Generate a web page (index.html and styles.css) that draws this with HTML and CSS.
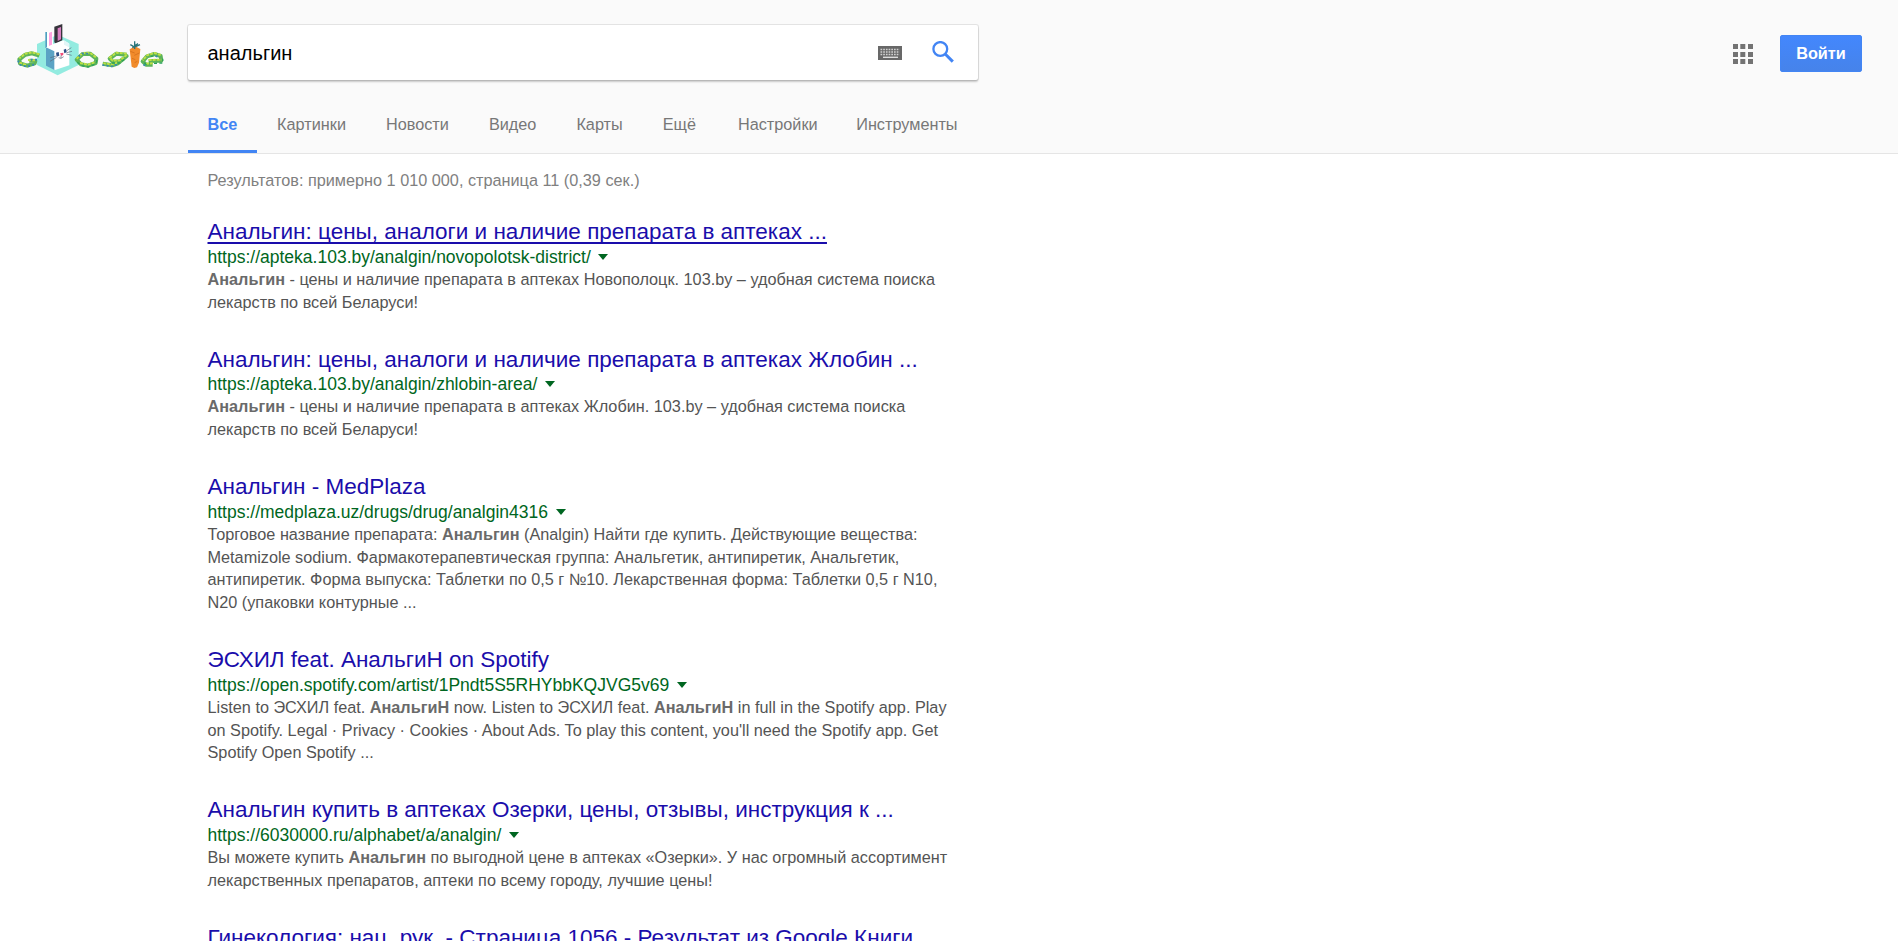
FILE: index.html
```html
<!DOCTYPE html>
<html lang="ru">
<head>
<meta charset="utf-8">
<title>анальгин - Поиск</title>
<link rel="stylesheet" href="styles.css">
</head>
<body>
<header class="header">
  <div class="topbar">
    <svg class="logo" viewBox="0 0 540 240" aria-label="Логотип">
      <path d="M173 74 236 102V165L173 196 111 165V102Z" fill="#93ebe0"/>
      <path d="M137 66 157 64 160 112 137 115Z" fill="#fff"/>
      <path d="M136 66h5v48h-5z" fill="#4d9fc0"/>
      <path d="M147 68 156 65V106L147 109Z" fill="#ffa3e0"/>
      <path d="M163 50 187 42V91L168 101 163 97Z" fill="#37343c"/>
      <path d="M173 55 183 51V88L173 93Z" fill="#d87fc1"/>
      <path d="M138 112 166 100 190 91 208 101V166L165 180 138 166Z" fill="#fff"/>
      <path d="M138 112 163 124V180L138 167Z" fill="#5ba3c4"/>
      <path d="M192 91 207 100V112L192 104Z" fill="#e2f6f7"/>
      <path d="M168 128 176 126 178 137 170 140ZM191 119 198 116 200 127 193 130Z" fill="#2e5187"/>
      <path d="M180 130 190 128 190 134 184 138Z" fill="#f24e79"/>
      <path d="M183 136v9M176 143l7 2 8-5M199 123l15-10M200 128l16-4M199 132l16 4M169 138l-18 5M170 142l-20 12" fill="none" stroke="#59667a" stroke-width="2"/>
      <g fill="none" stroke-linejoin="round">
        <g stroke="#5cb45a" stroke-width="12">
          <path d="M118 137 96 130 76 134 58 148 60 160 82 167 104 160 106 153 88 152"/>
          <path d="M230 149 248 132 270 131 289 146 287 159 264 167 243 163Z"/>
          <path d="M380 134 349 131 329 146 338 155 360 154 380 138 354 160 337 166 308 161"/>
          <path d="M446 153 484 152 482 138 463 132 441 139 428 154 438 164 458 164"/>
        </g>
        <g stroke="#bfe043" stroke-width="6" stroke-dasharray="9 3">
          <path d="M118 133 96 127 76 131 58 145M84 150l22 1M58 158l22 7"/>
          <path d="M230 146 248 129 270 128 289 143M240 159 264 164 287 156"/>
          <path d="M380 131 349 128 329 143 338 152 360 151 380 135M352 158l-16 6-26-4"/>
          <path d="M446 150 484 149M482 135 463 129 441 136 428 151M438 161l20-1"/>
        </g>
        <g stroke="#3587b6" stroke-width="5" stroke-dasharray="6 7">
          <path d="M54 152l5 12 22 6 25-7M92 149h19M236 139l10-9 22 1M307 165l28 4 17-6M430 164l12 5M472 140l-10-4"/>
        </g>
        <g stroke="#2ba15a" stroke-width="4" stroke-dasharray="9 7">
          <path d="M232 157l12 10 21 4 23-10 3-14M336 159l24 0 17-14M433 158l10 9M462 160l26-1v-13M452 140l12-3"/>
        </g>
      </g>
      <path d="M389 118 405 109 421 117 417 158 411 172 403 174 395 170Z" fill="#f18b2b"/>
      <path d="M391 124l13 5M403 136l15-7M396 145l10 4M404 158l8-4" stroke="#d9741f" stroke-width="3"/>
      <path d="M404 94v23M391 104l13 7 16-7M397 113l17-12" stroke="#2a767b" stroke-width="4" fill="none"/>
    </svg>
    <form class="search">
      <span class="query">анальгин</span>
      <svg class="keyboard" viewBox="0 0 24 14">
        <path d="M0 0h24v14H0z" fill="#686868"/>
        <path d="M2.5 3.5h19M2.5 6h19M2.5 8.500h19" stroke="#d0d0d0" stroke-width="1.4" stroke-dasharray="1.7 1"/>
        <path d="M5 11.3h15" stroke="#ddd" stroke-width="1.4"/>
      </svg>
      <svg class="lens" viewBox="0 0 22 22">
        <circle cx="8.3" cy="8" r="6.9" fill="none" stroke="#4285f4" stroke-width="2.3"/>
        <path d="M13.2 13 20.8 20.6" stroke="#4285f4" stroke-width="3"/>
      </svg>
    </form>
    <div class="account">
      <svg class="apps" viewBox="0 0 20 20" fill="#737373">
        <path d="M0 0h5v5H0zM7.300 0h5v5h-5zM15 0h5v5h-5zM0 8h5v5H0zM7.300 8h5v5h-5zM15 8h5v5h-5zM0 15h5v5H0zM7.300 15h5v5h-5zM15 15h5v5h-5z"/>
      </svg>
      <a class="signin">Войти</a>
    </div>
  </div>
  <nav class="tabs">
    <a class="tab active">Все</a>
    <a class="tab">Картинки</a>
    <a class="tab">Новости</a>
    <a class="tab">Видео</a>
    <a class="tab">Карты</a>
    <a class="tab">Ещё</a>
    <a class="tab settings">Настройки</a>
    <a class="tab tools">Инструменты</a>
  </nav>
</header>
<main class="main">
  <div class="stats">Результатов: примерно 1 010 000, страница 11 (0,39 сек.)</div>
  <article class="result">
    <h3 class="title focused"><a>Анальгин: цены, аналоги и наличие препарата в аптеках ...</a></h3>
    <div class="url">https://apteka.103.by/analgin/novopolotsk-district/<i class="caret"></i></div>
    <p class="snippet"><b>Анальгин</b> - цены и наличие препарата в аптеках Новополоцк. 103.by – удобная система поиска<br>лекарств по всей Беларуси!</p>
  </article>
  <article class="result">
    <h3 class="title"><a>Анальгин: цены, аналоги и наличие препарата в аптеках Жлобин ...</a></h3>
    <div class="url">https://apteka.103.by/analgin/zhlobin-area/<i class="caret"></i></div>
    <p class="snippet"><b>Анальгин</b> - цены и наличие препарата в аптеках Жлобин. 103.by – удобная система поиска<br>лекарств по всей Беларуси!</p>
  </article>
  <article class="result">
    <h3 class="title"><a>Анальгин - MedPlaza</a></h3>
    <div class="url">https://medplaza.uz/drugs/drug/analgin4316<i class="caret"></i></div>
    <p class="snippet">Торговое название препарата: <b>Анальгин</b> (Analgin) Найти где купить. Действующие вещества:<br>Metamizole sodium. Фармакотерапевтическая группа: Анальгетик, антипиретик, Анальгетик,<br>антипиретик. Форма выпуска: Таблетки по 0,5 г №10. Лекарственная форма: Таблетки 0,5 г N10,<br>N20 (упаковки контурные ...</p>
  </article>
  <article class="result">
    <h3 class="title"><a>ЭСХИЛ feat. АнальгиН on Spotify</a></h3>
    <div class="url">https://open.spotify.com/artist/1Pndt5S5RHYbbKQJVG5v69<i class="caret"></i></div>
    <p class="snippet">Listen to ЭСХИЛ feat. <b>АнальгиН</b> now. Listen to ЭСХИЛ feat. <b>АнальгиН</b> in full in the Spotify app. Play<br>on Spotify. Legal · Privacy · Cookies · About Ads. To play this content, you'll need the Spotify app. Get<br>Spotify Open Spotify ...</p>
  </article>
  <article class="result">
    <h3 class="title"><a>Анальгин купить в аптеках Озерки, цены, отзывы, инструкция к ...</a></h3>
    <div class="url">https://6030000.ru/alphabet/a/analgin/<i class="caret"></i></div>
    <p class="snippet">Вы можете купить <b>Анальгин</b> по выгодной цене в аптеках «Озерки». У нас огромный ассортимент<br>лекарственных препаратов, аптеки по всему городу, лучшие цены!</p>
  </article>
  <article class="result">
    <h3 class="title"><a>Гинекология: нац. рук. - Страница 1056 - Результат из Google Книги</a></h3>
  </article>
</main>
</body>
</html>
```
FILE: styles.css
```css
* { box-sizing: border-box; }
html, body { height: 100%; }
body {
  margin: 0;
  overflow: hidden;
  background: #fff;
  color: #545454;
  font-family: "Liberation Sans", Arial, sans-serif;
  font-size: 16.25px;
}
.header {
  display: flex;
  flex-direction: column;
  justify-content: space-between;
  height: 154px;
  background: #fafafa;
  border-bottom: 1px solid #e5e5e5;
}
.topbar { display: flex; align-items: flex-start; padding-top: 10px; }
.logo { width: 180px; height: 80px; }
.search {
  display: flex;
  align-items: center;
  width: 790px;
  height: 55px;
  margin: 15px 0 0 8px;
  padding: 0 24.5px 0 19.5px;
  background: #fff;
  border-radius: 2px;
  box-shadow: 0 2px 2px rgba(0,0,0,.2), 0 0 0 1px rgba(0,0,0,.09);
}
.query { flex: 1; padding-top: 2px; color: #000; font-size: 20px; }
.keyboard { width: 24px; height: 14px; margin-right: 29.5px; }
.lens { width: 22px; height: 22px; margin-top: -2px; }
.account {
  display: flex;
  align-items: center;
  gap: 27px;
  margin: 25px 36px 0 auto;
}
.apps { width: 20px; height: 20px; }
.signin {
  width: 82px;
  height: 37px;
  border: 1px solid #4285f4;
  border-radius: 2px;
  background: linear-gradient(#4387fd, #4683ea);
  color: #fff;
  font-weight: bold;
  line-height: 35px;
  text-align: center;
}
.tabs { display: flex; height: 56px; padding-left: 188px; }
.tab {
  height: 55px;
  padding: 0 20px;
  color: #777;
  line-height: 55px;
}
.tab.active {
  height: 55.5px;
  padding: 0 19.8px 0 19.5px;
  border-bottom: 3px solid #4285f4;
  color: #4285f4;
  font-weight: bold;
}
.settings { margin-left: 2px; }
.tab.tools { padding-left: 18.6px; }
.main { padding-left: 207.5px; }
.stats { height: 64.2px; color: #808080; line-height: 52px; }
.result { margin-bottom: 32.3px; }
.title {
  height: 27.7px;
  margin: 0;
  color: #1a0dab;
  font-size: 22.5px;
  font-weight: normal;
  line-height: 27px;
  white-space: nowrap;
}
.focused {
  text-decoration: underline;
  text-decoration-skip-ink: none;
  text-decoration-thickness: 2px;
  text-underline-offset: 3px;
}
.url { color: #006621; font-size: 17.5px; line-height: 22px; white-space: nowrap; }
.caret {
  display: inline-block;
  margin-left: 7.5px;
  border: 5px solid transparent;
  border-top: 6px solid #006621;
  border-bottom: 0;
  vertical-align: 3px;
}
.snippet { margin: 0; line-height: 22.75px; white-space: nowrap; }
.snippet b { color: #6a6a6a; }
```
